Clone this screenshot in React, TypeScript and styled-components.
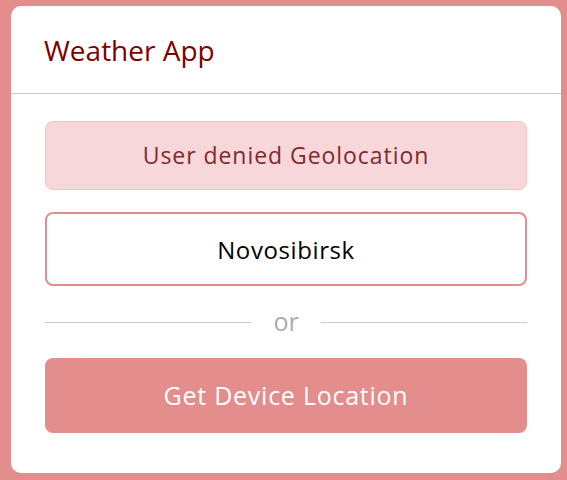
import React from "react";
import styled, { createGlobalStyle } from "styled-components";

const Global = createGlobalStyle`
  html, body { margin: 0; padding: 0; background: #e48d8d; }
  body { font-family: "Open Sans", "Noto Sans", sans-serif; }
  * { box-sizing: border-box; }
`;

const Page = styled.div`
  padding: 6px 6px 7px 11px;
`;

const Card = styled.div`
  background: #ffffff;
  border-radius: 10px;
  height: 467px;
  display: flex;
  flex-direction: column;
`;

const Header = styled.header`
  height: 88px;
  padding: 0 33px;
  display: flex;
  align-items: center;
  border-bottom: 1px solid #cccccc;
`;

const Title = styled.h1`
  margin: 0;
  font-size: 28px;
  font-weight: 400;
  color: #800000;
  letter-spacing: 0;
`;

const Body = styled.div`
  padding: 27px 34px 40px;
  display: flex;
  flex-direction: column;
  gap: 14px;
`;

const Alert = styled.div`
  height: 69px;
  margin-bottom: 8px;
  background: #f8d7da;
  border: 1px solid #f5c2c7;
  border-radius: 8px;
  color: #7e2a2e;
  font-size: 23px;
  letter-spacing: 0.95px;
  display: flex;
  align-items: center;
  justify-content: center;
  padding-bottom: 2px;
`;

const CityInput = styled.input`
  height: 74px;
  width: 100%;
  border: 2px solid #e48d8d;
  border-radius: 8px;
  background: #ffffff;
  font-family: inherit;
  font-size: 24px;
  letter-spacing: 0.6px;
  color: #000000;
  text-align: center;
  outline: none;
`;

const Divider = styled.div`
  height: 44px;
  display: flex;
  align-items: center;
  gap: 22px;
`;

const Line = styled.span`
  flex: 1;
  height: 1px;
  background: #cccccc;
`;

const OrText = styled.span`
  font-size: 25px;
  color: #a8adb3;
  line-height: 1;
  padding-bottom: 2px;
`;

const LocationButton = styled.button`
  height: 75px;
  width: 100%;
  border: none;
  border-radius: 8px;
  background: #e48d8d;
  color: #ffffff;
  font-family: inherit;
  font-size: 25px;
  letter-spacing: 0.75px;
  padding-bottom: 3px;
  cursor: pointer;
`;

export default function App() {
  return (
    <>
      <Global />
      <Page>
        <Card>
          <Header>
            <Title>Weather App</Title>
          </Header>
          <Body>
            <Alert>User denied Geolocation</Alert>
            <CityInput defaultValue="Novosibirsk" />
            <Divider>
              <Line />
              <OrText>or</OrText>
              <Line />
            </Divider>
            <LocationButton>Get Device Location</LocationButton>
          </Body>
        </Card>
      </Page>
    </>
  );
}
